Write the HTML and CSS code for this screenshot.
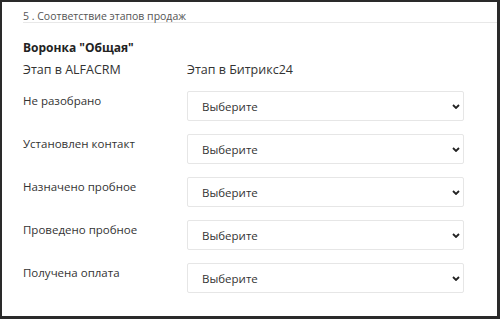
FILE: index.html
```html
<!DOCTYPE html>
<html lang="ru">
<head>
<meta charset="utf-8">
<link rel="stylesheet" href="styles.css">
</head>
<body>
<div class="frame">
  <div class="section-head">5 . Соответствие этапов продаж</div>
  <div class="content">
    <div class="funnel-title">Воронка "Общая"</div>
    <div class="grid">
      <div class="col-head">Этап в ALFACRM</div>
      <div class="col-head">Этап в Битрикс24</div>

      <div class="label">Не разобрано</div>
      <div class="select">Выберите<svg class="chev" viewBox="0 0 8 5"><path d="M1 1 L4 4 L7 1" /></svg></div>

      <div class="label">Установлен контакт</div>
      <div class="select">Выберите<svg class="chev" viewBox="0 0 8 5"><path d="M1 1 L4 4 L7 1" /></svg></div>

      <div class="label">Назначено пробное</div>
      <div class="select">Выберите<svg class="chev" viewBox="0 0 8 5"><path d="M1 1 L4 4 L7 1" /></svg></div>

      <div class="label">Проведено пробное</div>
      <div class="select">Выберите<svg class="chev" viewBox="0 0 8 5"><path d="M1 1 L4 4 L7 1" /></svg></div>

      <div class="label">Получена оплата</div>
      <div class="select">Выберите<svg class="chev" viewBox="0 0 8 5"><path d="M1 1 L4 4 L7 1" /></svg></div>
    </div>
  </div>
</div>
</body>
</html>
```
FILE: styles.css
```css
* { box-sizing: border-box; }
html, body { margin: 0; padding: 0; background: #fff; }
body { font-family: "Open Sans", "Noto Sans", sans-serif; color: #333; }
.frame {
  width: 500px;
  height: 319px;
  border-style: solid;
  border-color: #2a2a2a;
  border-width: 2px 3px 3px 2px;
  background: #fff;
}
.section-head {
  margin-left: 21px;
  padding-top: 9px;
  font-size: 10.5px;
  line-height: 11px;
  color: #555;
  border-bottom: 1px solid #e8e8e8;
}
.content { padding-left: 21px; }
.funnel-title {
  margin-top: 17px;
  font-size: 12px;
  line-height: 16px;
  font-weight: 700;
  color: #222;
}
.grid {
  margin-top: 6px;
  display: grid;
  grid-template-columns: 164px 277px;
  row-gap: 13px;
  align-items: start;
}
.col-head { font-size: 12.5px; line-height: 16px; color: #333; }
.label { font-size: 11.5px; line-height: 16px; color: #333; padding-top: 2px; }
.select {
  height: 30px;
  border: 1px solid #e6e6e6;
  border-radius: 2px;
  display: flex;
  align-items: center;
  justify-content: space-between;
  padding: 0 3px 0 14px;
  font-size: 11.5px;
  color: #333;
}
.chev { width: 8px; height: 5px; fill: none; stroke: #222; stroke-width: 1.8; }
```
